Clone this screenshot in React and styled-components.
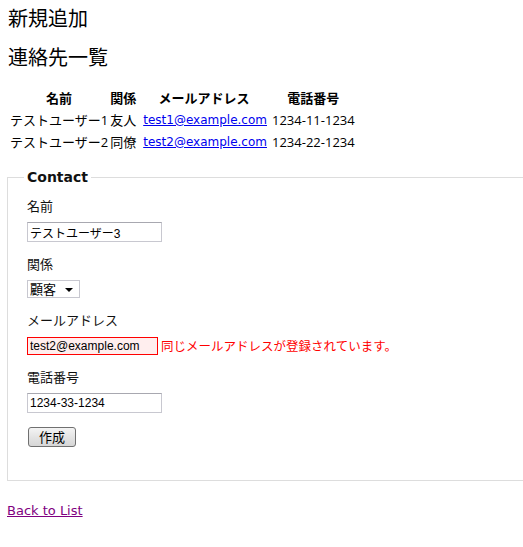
import React from 'react'
import styled, { createGlobalStyle } from 'styled-components'

const contacts = [
  { name: 'テストユーザー1', relation: '友人', email: 'test1@example.com', tel: '1234-11-1234' },
  { name: 'テストユーザー2', relation: '同僚', email: 'test2@example.com', tel: '1234-22-1234' },
]

const GlobalStyle = createGlobalStyle`
  html, body {
    margin: 0;
    padding: 0;
    overflow: hidden;
    background: #fff;
  }
  body {
    font-family: "Open Sans", "Noto Sans CJK JP", sans-serif;
    font-size: 13px;
    color: #000;
  }
`

const Page = styled.div`
  padding: 6px 0 0 8px;
  overflow: hidden;
`

const Heading = styled.h2`
  margin: 0 0 ${p => p.$gap}px;
  font-family: "Noto Sans CJK JP", sans-serif;
  font-size: 20px;
  font-weight: normal;
  line-height: 24px;
`

const Table = styled.table`
  border-collapse: collapse;
  margin-left: 1px;
  th, td {
    padding: 1px 1px;
    line-height: 19px;
    white-space: nowrap;
  }
  th {
    font-weight: bold;
    text-align: center;
  }
  td {
    text-align: left;
  }
`

const MailCell = styled.td`
  && {
    padding-left: 6px;
    padding-right: 4px;
  }
`

const MailLink = styled.a`
  font-family: "DejaVu Sans", sans-serif;
  font-size: 12px;
  color: #0000ee;
  text-decoration: underline;
`

const Fieldset = styled.fieldset`
  margin: 15px -40px 0 -1px;
  padding: 0 19px 33px 19px;
  border: 1px solid #dddddd;
`

const Legend = styled.legend`
  margin-left: -3px;
  padding: 0 3px;
  font-family: "DejaVu Sans", sans-serif;
  font-size: 14px;
  font-weight: bold;
  line-height: 18px;
  color: #111;
`

const Field = styled.div`
  margin-top: 13px;
  display: flex;
  flex-direction: column;
  align-items: flex-start;

  &:first-of-type {
    margin-top: 11px;
  }
`

const Label = styled.label`
  font-family: "Noto Sans CJK JP", sans-serif;
  font-size: 13px;
  line-height: 18px;
  margin-bottom: 7px;
  color: #111;
`

const Row = styled.div`
  display: flex;
  align-items: center;
  gap: 3px;
`

const TextInput = styled.input`
  box-sizing: border-box;
  width: ${p => p.$w}px;
  height: ${p => p.$h}px;
  margin: 0;
  padding: 0 2px;
  font-family: "Liberation Sans", "Noto Sans CJK JP", sans-serif;
  font-size: 12px;
  color: #000;
  border: 1px solid ${p => (p.$error ? '#ff0000' : '#c8c8d0')};
  border-top-color: ${p => (p.$error ? '#ff0000' : '#a8a8b0')};
  background: ${p => (p.$error ? '#ffeeee' : '#fff')};
  outline: none;
`

const ErrorText = styled.span`
  font-family: "Noto Sans CJK JP", sans-serif;
  font-size: 12.5px;
  color: #ff0000;
`

const SelectWrap = styled.div`
  position: relative;
  width: 53px;
  height: 18px;

  &::after {
    content: '';
    position: absolute;
    right: 7px;
    top: 8px;
    border-left: 4px solid transparent;
    border-right: 4px solid transparent;
    border-top: 4px solid #000;
    pointer-events: none;
  }
`

const Select = styled.select`
  appearance: none;
  box-sizing: border-box;
  width: 100%;
  height: 100%;
  margin: 0;
  padding: 0 0 0 2px;
  font-family: "Noto Sans CJK JP", sans-serif;
  font-size: 13px;
  line-height: 16px;
  color: #000;
  background: #fff;
  border: 1px solid #c8c8d0;
  border-radius: 0;
  outline: none;
`

const Button = styled.button`
  margin-top: 14px;
  width: 48px;
  height: 20px;
  padding: 0;
  margin-left: 1px;
  font-family: "Noto Sans CJK JP", sans-serif;
  font-size: 13px;
  line-height: 16px;
  color: #000;
  border: 1px solid #707070;
  border-radius: 3px;
  background: linear-gradient(#f4f4f4, #e4e4e4 50%, #d6d6d6);
`

const BackLink = styled.a`
  display: inline-block;
  margin-top: 21px;
  margin-left: -1px;
  font-family: "DejaVu Sans", sans-serif;
  font-size: 13px;
  line-height: 18px;
  color: #800080;
  text-decoration: underline;
`

const App = () => {
  return (
    <>
      <GlobalStyle />
      <Page>
        <Heading $gap={15}>新規追加</Heading>
        <Heading $gap={19}>連絡先一覧</Heading>
        <Table>
          <thead>
            <tr>
              <th>名前</th>
              <th>関係</th>
              <th>メールアドレス</th>
              <th>電話番号</th>
            </tr>
          </thead>
          <tbody>
            {contacts.map(c => (
              <tr key={c.email}>
                <td>{c.name}</td>
                <td>{c.relation}</td>
                <MailCell><MailLink href="#">{c.email}</MailLink></MailCell>
                <td>{c.tel}</td>
              </tr>
            ))}
          </tbody>
        </Table>

        <Fieldset>
          <Legend>Contact</Legend>
          <Field>
            <Label>名前</Label>
            <TextInput $w={135} $h={20} defaultValue="テストユーザー3" />
          </Field>
          <Field>
            <Label>関係</Label>
            <SelectWrap>
              <Select defaultValue="顧客">
                <option>友人</option>
                <option>同僚</option>
                <option>顧客</option>
              </Select>
            </SelectWrap>
          </Field>
          <Field>
            <Label>メールアドレス</Label>
            <Row>
              <TextInput $w={131} $h={18} $error defaultValue="test2@example.com" />
              <ErrorText>同じメールアドレスが登録されています。</ErrorText>
            </Row>
          </Field>
          <Field>
            <Label>電話番号</Label>
            <TextInput $w={135} $h={20} defaultValue="1234-33-1234" />
          </Field>
          <Button>作成</Button>
        </Fieldset>

        <BackLink href="#">Back to List</BackLink>
      </Page>
    </>
  )
}

export default App
